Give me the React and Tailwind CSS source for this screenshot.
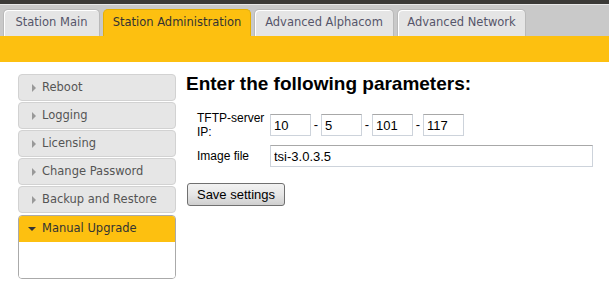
import React from 'react';

const tabs = [
  { label: 'Station Main', w: 'w-[97px]' },
  { label: 'Station Administration', w: 'w-[148px]', active: true },
  { label: 'Advanced Alphacom', w: 'w-[140px]' },
  { label: 'Advanced Network', w: 'w-[129px]' },
];

const menu = ['Reboot', 'Logging', 'Licensing', 'Change Password', 'Backup and Restore'];

const Arrow = ({ down }) =>
  down ? (
    <svg width="8" height="6" viewBox="0 0 8 6" className="mr-[6px]">
      <path d="M0 1 L8 1 L4 5 Z" fill="#333" />
    </svg>
  ) : (
    <svg width="6" height="8" viewBox="0 0 6 8" className="mr-[5px]">
      <path d="M1 0 L5 4 L1 8 Z" fill="#999" />
    </svg>
  );

const Field = ({ value, w }) => (
  <input
    readOnly
    value={value}
    className={`${w} h-[22px] px-[3px] bg-white border border-[#cdd3db] border-t-[#a8a8a8] text-[13px] text-black outline-none font-['Liberation_Sans',Arial,sans-serif]`}
  />
);

export default function App() {
  return (
    <div className="w-[609px] h-[285px] bg-white overflow-hidden font-['DejaVu_Sans',Verdana,sans-serif]">
      {/* top strip + tab bar */}
      <div className="h-[4px] bg-[#3b3a37]" />
      <div className="h-[32px] bg-[#c9c9c9] border-t border-[#e8e8e8] flex items-end pl-[3px] gap-[3px]">
        {tabs.map((t) => (
          <div
            key={t.label}
            className={`${t.w} h-[27px] rounded-t-[5px] flex items-center justify-center text-[11.5px] ${
              t.active
                ? 'bg-[#fdc010] text-[#333] border border-b-0 border-[#e6b000]'
                : 'bg-[#e5e5e5] text-[#55556a] border border-b-0 border-[#b9b9b9] shadow-[inset_1px_1px_0_#fff]'
            }`}
          >
            {t.label}
          </div>
        ))}
      </div>
      <div className="h-[26px] bg-[#fdc010]" />

      <div className="flex pl-[18px] pt-[12px]">
        {/* sidebar */}
        <div className="w-[158px] flex flex-col gap-[1px]">
          {menu.map((m) => (
            <div
              key={m}
              className="h-[27px] flex items-center pl-[12px] bg-[#e6e6e6] border border-[#d2d2d2] rounded-[4px] text-[11.5px] text-[#555]"
            >
              <Arrow />
              {m}
            </div>
          ))}
          <div className="h-[64px] mt-[1px] border border-[#aaa] rounded-[4px] overflow-hidden flex flex-col">
            <div className="h-[26px] bg-[#fdc010] flex items-center pl-[9px] text-[11.5px] text-[#333]">
              <Arrow down />
              Manual Upgrade
            </div>
            <div className="flex-1 bg-white" />
          </div>
        </div>

        {/* content */}
        <div className="ml-[10px] font-['Liberation_Sans',Arial,sans-serif]">
          <h1 className="text-[19px] font-bold leading-[22px] text-black mt-[-1px]">
            Enter the following parameters:
          </h1>
          <div className="mt-[16px] flex items-center">
            <div className="w-[84px] pl-[11px] pr-[4px] text-[12px] leading-[14px] text-black">
              TFTP-server IP:
            </div>
            <div className="flex items-center text-[13px]">
              <Field value="10" w="w-[41px]" />
              <span className="w-[10px] text-center">-</span>
              <Field value="5" w="w-[41px]" />
              <span className="w-[10px] text-center">-</span>
              <Field value="101" w="w-[41px]" />
              <span className="w-[10px] text-center">-</span>
              <Field value="117" w="w-[41px]" />
            </div>
          </div>
          <div className="mt-[6px] flex items-center">
            <div className="w-[84px] pl-[11px] text-[12px] text-black">Image file</div>
            <Field value="tsi-3.0.3.5" w="w-[323px]" />
          </div>
          <button className="mt-[16px] ml-[1px] w-[98px] h-[23px] rounded-[3px] border border-[#707070] bg-gradient-to-b from-[#f2f2f2] via-[#e6e6e6] to-[#cfcfcf] text-[13px] text-black">
            Save settings
          </button>
        </div>
      </div>
    </div>
  );
}
